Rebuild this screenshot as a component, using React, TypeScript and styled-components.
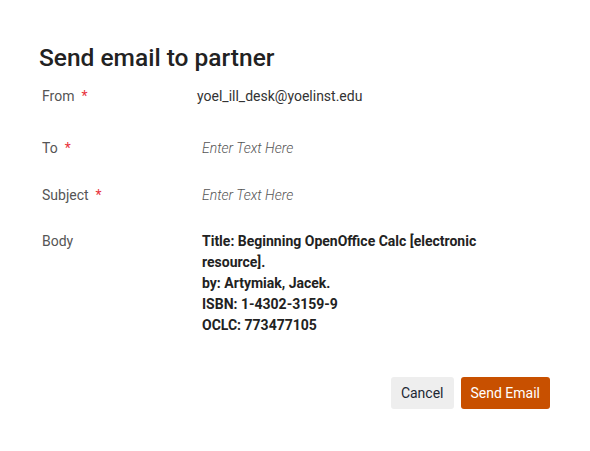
import React from 'react';
import styled, { createGlobalStyle } from 'styled-components';

const GlobalStyle = createGlobalStyle`
  html, body {
    margin: 0;
    padding: 0;
    background: #fff;
    font-family: Roboto, "Liberation Sans", Arial, sans-serif;
  }
`;

const Dialog = styled.div`
  width: 590px;
  height: 451px;
  box-sizing: border-box;
  padding: 44px 40px 0 39px;
  display: flex;
  flex-direction: column;
`;

const Title = styled.h2`
  margin: 0 0 14px;
  font-size: 24.5px;
  line-height: 28px;
  font-weight: 500;
  color: #222;
`;

const Row = styled.div<{ height?: number }>`
  display: grid;
  grid-template-columns: 155px 1fr;
  padding-left: 3px;
  min-height: ${props => (props.height ? `${props.height}px` : 'auto')};
`;

const Label = styled.div`
  font-size: 14px;
  line-height: 21px;
  color: #555;
`;

const Required = styled.span`
  color: #e8323c;
  margin-left: 7px;
`;

const Value = styled.div`
  font-size: 14px;
  line-height: 21px;
  color: #333;
`;

const TextInput = styled.input`
  border: none;
  outline: none;
  padding: 0 0 0 5px;
  margin: 0;
  height: 21px;
  font-family: inherit;
  font-size: 14px;
  line-height: 21px;
  color: #333;
  background: transparent;
  width: 290px;

  &::placeholder {
    font-style: italic;
    font-weight: 300;
    color: #555;
  }
`;

const BodyText = styled.div`
  padding-left: 5px;
  width: 290px;
  font-size: 14px;
  line-height: 21px;
  font-weight: 700;
  color: #222;
`;

const Actions = styled.div`
  display: flex;
  justify-content: flex-end;
  gap: 7px;
  margin-top: 41px;
`;

const Button = styled.button<{ primary?: boolean }>`
  height: 32px;
  padding: 0 10px;
  border: none;
  border-radius: 3px;
  font-family: inherit;
  font-size: 14px;
  cursor: pointer;
  background: ${props => (props.primary ? '#c85000' : '#eeeeee')};
  color: ${props => (props.primary ? '#fff' : '#1c2733')};
`;

export default function App() {
  return (
    <>
      <GlobalStyle />
      <Dialog>
        <Title>Send email to partner</Title>
        <Row height={52}>
          <Label>
            From<Required>*</Required>
          </Label>
          <Value>yoel_ill_desk@yoelinst.edu</Value>
        </Row>
        <Row height={47}>
          <Label>
            To<Required>*</Required>
          </Label>
          <TextInput placeholder="Enter Text Here" />
        </Row>
        <Row height={46}>
          <Label>
            Subject<Required>*</Required>
          </Label>
          <TextInput placeholder="Enter Text Here" />
        </Row>
        <Row>
          <Label>Body</Label>
          <BodyText>
            Title: Beginning OpenOffice Calc [electronic resource].
            <br />
            by: Artymiak, Jacek.
            <br />
            ISBN: 1-4302-3159-9
            <br />
            OCLC: 773477105
          </BodyText>
        </Row>
        <Actions>
          <Button>Cancel</Button>
          <Button primary>Send Email</Button>
        </Actions>
      </Dialog>
    </>
  );
}
